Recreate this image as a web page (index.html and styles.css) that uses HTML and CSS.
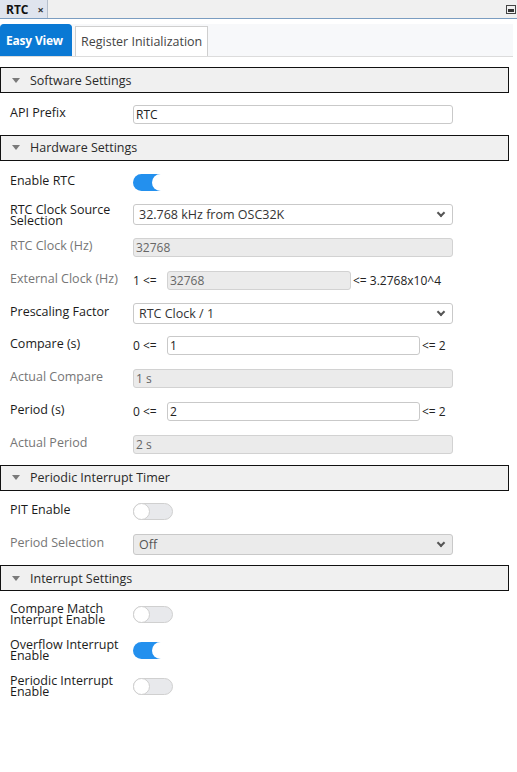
FILE: index.html
```html
<!DOCTYPE html>
<html>
<head>
<meta charset="utf-8">
<link rel="stylesheet" href="styles.css">
</head>
<body>
<div class="app">
  <div class="titlebar">
    <div class="doc-tab"><span class="doc-name">RTC</span><span class="doc-close">×</span></div>
    <div class="min-btn"><span class="min-bar"></span></div>
  </div>
  <div class="tabs">
    <div class="tab active">Easy View</div>
    <div class="tab">Register Initialization</div>
  </div>

  <div class="section-head"><span class="tri"></span>Software Settings</div>
  <div class="section">
    <div class="row">
      <div class="label">API Prefix</div>
      <div class="ctrl"><div class="input">RTC</div></div>
    </div>
  </div>

  <div class="section-head"><span class="tri"></span>Hardware Settings</div>
  <div class="section">
    <div class="row">
      <div class="label">Enable RTC</div>
      <div class="ctrl"><div class="toggle on"><span class="knob"></span></div></div>
    </div>
    <div class="row">
      <div class="label two">RTC Clock Source Selection</div>
      <div class="ctrl"><div class="select">32.768 kHz from OSC32K<span class="chev"></span></div></div>
    </div>
    <div class="row">
      <div class="label dim">RTC Clock (Hz)</div>
      <div class="ctrl"><div class="input disabled">32768</div></div>
    </div>
    <div class="row">
      <div class="label dim">External Clock (Hz)</div>
      <div class="ctrl range"><span class="pre">1 &lt;=</span><div class="input disabled ext">32768</div><span class="post">&lt;= 3.2768x10^4</span></div>
    </div>
    <div class="row">
      <div class="label">Prescaling Factor</div>
      <div class="ctrl"><div class="select">RTC Clock / 1<span class="chev"></span></div></div>
    </div>
    <div class="row">
      <div class="label">Compare (s)</div>
      <div class="ctrl range"><span class="pre">0 &lt;=</span><div class="input num">1</div><span class="post">&lt;= 2</span></div>
    </div>
    <div class="row">
      <div class="label dim">Actual Compare</div>
      <div class="ctrl"><div class="input disabled">1 s</div></div>
    </div>
    <div class="row">
      <div class="label">Period (s)</div>
      <div class="ctrl range"><span class="pre">0 &lt;=</span><div class="input num">2</div><span class="post">&lt;= 2</span></div>
    </div>
    <div class="row">
      <div class="label dim">Actual Period</div>
      <div class="ctrl"><div class="input disabled">2 s</div></div>
    </div>
  </div>

  <div class="section-head"><span class="tri"></span>Periodic Interrupt Timer</div>
  <div class="section">
    <div class="row">
      <div class="label">PIT Enable</div>
      <div class="ctrl"><div class="toggle off"><span class="knob"></span></div></div>
    </div>
    <div class="row">
      <div class="label dim">Period Selection</div>
      <div class="ctrl"><div class="select disabled">Off<span class="chev"></span></div></div>
    </div>
  </div>

  <div class="section-head"><span class="tri"></span>Interrupt Settings</div>
  <div class="section last">
    <div class="row tall">
      <div class="label two">Compare Match Interrupt Enable</div>
      <div class="ctrl"><div class="toggle off"><span class="knob"></span></div></div>
    </div>
    <div class="row tall">
      <div class="label two">Overflow Interrupt Enable</div>
      <div class="ctrl"><div class="toggle on"><span class="knob"></span></div></div>
    </div>
    <div class="row tall">
      <div class="label two">Periodic Interrupt Enable</div>
      <div class="ctrl"><div class="toggle off"><span class="knob"></span></div></div>
    </div>
  </div>
</div>
</body>
</html>
```

FILE: styles.css
```css
* { box-sizing: border-box; }
html, body { margin: 0; padding: 0; background: #fff; }
body {
  font-family: "Open Sans", "Noto Sans", sans-serif;
  font-size: 12px;
  color: #1b1b1b;
}
.app { width: 517px; }

.titlebar {
  height: 19px;
  background: #f0f0f0;
  border-bottom: 1px solid #7b9dc1;
  display: flex;
  justify-content: space-between;
  align-items: flex-start;
}
.doc-tab {
  height: 18px;
  width: 48px;
  background: #dfe4ee;
  border-right: 1px solid #b5bfcc;
  display: flex;
  align-items: center;
  padding-left: 6px;
  gap: 9px;
}
.doc-name { font-weight: 700; font-size: 12px; color: #111; }
.doc-close { font-weight: 700; font-size: 11px; color: #333; }
.min-btn {
  width: 10px;
  height: 9px;
  margin: 5px 1px 0 0;
  border: 1px solid #444;
  display: flex;
  align-items: flex-end;
  padding: 1px;
}
.min-bar { display: block; width: 100%; height: 3px; background: #333; }

.tabs {
  margin-top: 5px;
  width: 513px;
  height: 33px;
  background: #f7f8fa;
  border-bottom: 1px solid #dcdcdc;
  display: flex;
  align-items: flex-end;
  gap: 3px;
}
.tab {
  height: 30px;
  padding: 0 5px;
  border: 1px solid #cfcfcf;
  border-bottom: none;
  background: #fff;
  color: #444;
  font-size: 12.5px;
  display: flex;
  align-items: center;
  white-space: nowrap;
}
.tab.active {
  height: 32px;
  width: 72px;
  padding: 0 0 0 5px;
  background: #0a79d4;
  border-color: #0a79d4;
  border-radius: 4px 4px 0 0;
  color: #fff;
  font-weight: 700;
  font-size: 12px;
  letter-spacing: -0.2px;
}

.section-head {
  margin-top: 10px;
  width: 509px;
  height: 26px;
  border: 1px solid #111;
  background: #f0f0f0;
  display: flex;
  align-items: center;
  padding-left: 11px;
  font-size: 12.5px;
  color: #2a2a2a;
}
.section + .section-head { margin-top: 4px; }
.tri {
  width: 0; height: 0;
  border-left: 4.5px solid transparent;
  border-right: 4.5px solid transparent;
  border-top: 5px solid #7a7a7a;
  margin-right: 10px;
}

.section { padding: 5px 0 0 10px; }
.row {
  height: 32.75px;
  display: grid;
  grid-template-columns: 123px 320px;
  align-items: center;
}
.row.tall { height: 36px; }
.label { line-height: 14px; margin-bottom: 3px; font-size: 12.5px; }
.label.two { line-height: 11px; margin-bottom: 0; width: 112px; }
.label.dim { color: #767676; }

.ctrl { display: flex; align-items: center; }
.input {
  width: 320px;
  height: 19px;
  border: 1px solid #c9c9c9;
  border-radius: 3px;
  background: #fff;
  padding: 0 2px;
  display: flex;
  align-items: center;
  color: #222;
  font-size: 12px;
}
.input.disabled { background: #ebebeb; color: #666; border-color: #d2d2d2; }
.input.ext { width: 184px; }
.input.num { width: 253px; }
.range .pre { width: 34px; color: #222; }
.range .post { margin-left: 2px; color: #222; }

.select {
  width: 320px;
  height: 21px;
  border: 1px solid #c9c9c9;
  border-radius: 3px;
  background: #fff;
  padding: 0 5px;
  display: flex;
  align-items: center;
  justify-content: space-between;
  color: #333;
  font-size: 12.5px;
}
.select.disabled { background: #ebebeb; color: #555; }
.chev {
  width: 6px; height: 6px;
  border-right: 2px solid #555;
  border-bottom: 2px solid #555;
  transform: rotate(45deg);
  margin: -3px 3px 0 0;
}

.toggle {
  position: relative;
  height: 17px;
  border-radius: 9px;
}
.toggle.on { width: 40px; background: #fff; }
.toggle.on::before {
  content: "";
  position: absolute;
  left: 0; top: 0;
  width: 28px; height: 17px;
  border-radius: 9px 0 0 9px;
  background: #2390ee;
}
.toggle.on .knob {
  position: absolute;
  left: 19px; top: 0;
  width: 17px; height: 17px;
  border-radius: 50%;
  background: #fff;
}
.toggle.off {
  width: 40px;
  background: #e8e9ec;
  border: 1px solid #d0d0d0;
}
.toggle.off .knob {
  position: absolute;
  left: -1px; top: -1px;
  width: 17px; height: 17px;
  border-radius: 50%;
  background: #fff;
  border: 1px solid #cfcfcf;
}
```
